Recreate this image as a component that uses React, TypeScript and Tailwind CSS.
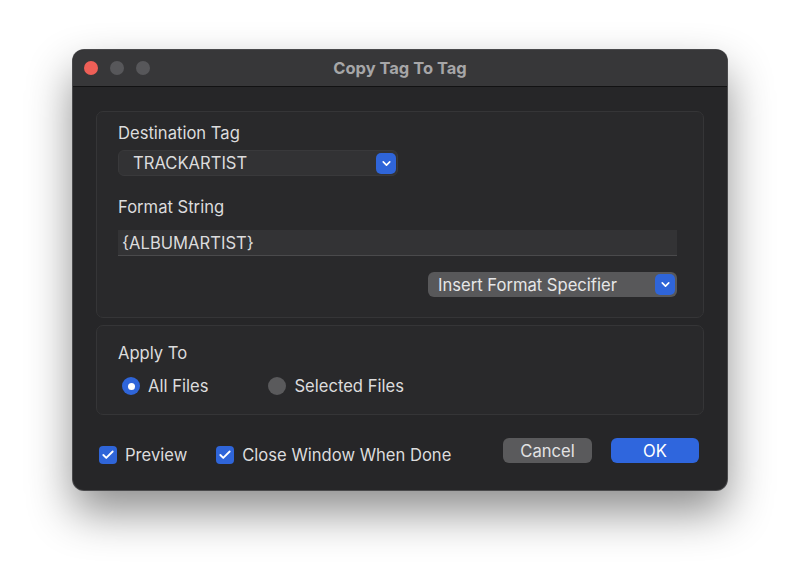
import { Check, ChevronDown } from "lucide-react";

function PopupChevron() {
  return (
    <span className="flex h-[21px] w-[20px] items-center justify-center rounded-[5px] bg-[#2f65d9] text-white">
      <ChevronDown size={13} strokeWidth={3} />
    </span>
  );
}

function CheckBox({ label }: { label: string }) {
  return (
    <label className="flex items-center gap-[8px]">
      <span className="flex h-[18px] w-[18px] items-center justify-center rounded-[4px] bg-[#2f65d9] text-white">
        <Check size={14} strokeWidth={3.2} />
      </span>
      <span>{label}</span>
    </label>
  );
}

function Radio({ label, on }: { label: string; on?: boolean }) {
  return (
    <label className="flex items-center gap-[8px]">
      {on ? (
        <span className="flex h-[18px] w-[18px] items-center justify-center rounded-full bg-[#2f65d9]">
          <span className="h-[7px] w-[7px] rounded-full bg-white" />
        </span>
      ) : (
        <span className="h-[18px] w-[18px] rounded-full bg-[#5a5a5c]" />
      )}
      <span>{label}</span>
    </label>
  );
}

export default function App() {
  return (
    <main
      className="h-[587px] w-[800px] bg-white pl-[73px] pt-[50px]"
      style={{ fontFamily: "Inter, 'Liberation Sans', sans-serif" }}
    >
      <div className="flex h-[440px] w-[654px] flex-col overflow-hidden rounded-[11px] bg-[#262628] shadow-[0_22px_45px_rgba(0,0,0,0.45)] ring-1 ring-[#4a4a4c]">
        {/* title bar */}
        <div className="relative flex h-[37px] items-center justify-center border-b border-[#121213] bg-[#373739]">
          <div className="absolute left-[11px] top-[11px] flex gap-[12px]">
            <span className="h-[14px] w-[14px] rounded-full bg-[#ee5f57]" />
            <span className="h-[14px] w-[14px] rounded-full bg-[#57575a]" />
            <span className="h-[14px] w-[14px] rounded-full bg-[#57575a]" />
          </div>
          <span className="text-[16.5px] font-bold text-[#a6a6a8]">Copy Tag To Tag</span>
        </div>

        <div className="flex flex-1 flex-col px-[23px] pt-[24px] text-[16.6px] leading-[20px] text-[#dcdcdd]">
          {/* destination + format */}
          <div className="flex h-[207px] flex-col rounded-[7px] border border-[#353537] bg-[#29292b] pl-[21px] pr-[26px] pt-[11px]">
            <span>Destination Tag</span>
            <div className="mt-[7px] flex h-[26px] w-[280px] items-center justify-between rounded-[6px] border border-[#39393b] bg-[#323234] pl-[14px] pr-[1px]">
              <span>TRACKARTIST</span>
              <PopupChevron />
            </div>
            <span className="mt-[21px]">Format String</span>
            <div className="mt-[13px] flex h-[26px] items-center border-b border-[#4a4a4c] bg-[#333335] pl-[4px]">
              {"{ALBUMARTIST}"}
            </div>
            <div className="mt-[16px] flex justify-end">
              <div className="flex h-[25px] w-[249px] items-center justify-between rounded-[6px] bg-[#58585a] pl-[10px] pr-[2px] text-[#e6e6e7]">
                <span>Insert Format Specifier</span>
                <PopupChevron />
              </div>
            </div>
          </div>

          {/* apply to */}
          <div className="mt-[7px] flex h-[90px] flex-col rounded-[7px] border border-[#353537] bg-[#29292b] pl-[21px] pt-[17px]">
            <span>Apply To</span>
            <div className="mt-[13px] flex items-center gap-[60px] pl-[4px]">
              <Radio label="All Files" on />
              <Radio label="Selected Files" />
            </div>
          </div>

          {/* bottom row */}
          <div className="mt-[23px] flex items-start justify-between pl-[3px] pr-[5px]">
            <div className="mt-[7px] flex items-center gap-[29px]">
              <CheckBox label="Preview" />
              <CheckBox label="Close Window When Done" />
            </div>
            <div className="flex gap-[19px]">
              <button className="h-[25px] w-[89px] rounded-[6px] bg-[#5a5a5c] text-[#e2e2e3]">Cancel</button>
              <button className="h-[25px] w-[88px] rounded-[6px] bg-[#2f66dd] text-white">OK</button>
            </div>
          </div>
        </div>
      </div>
    </main>
  );
}
